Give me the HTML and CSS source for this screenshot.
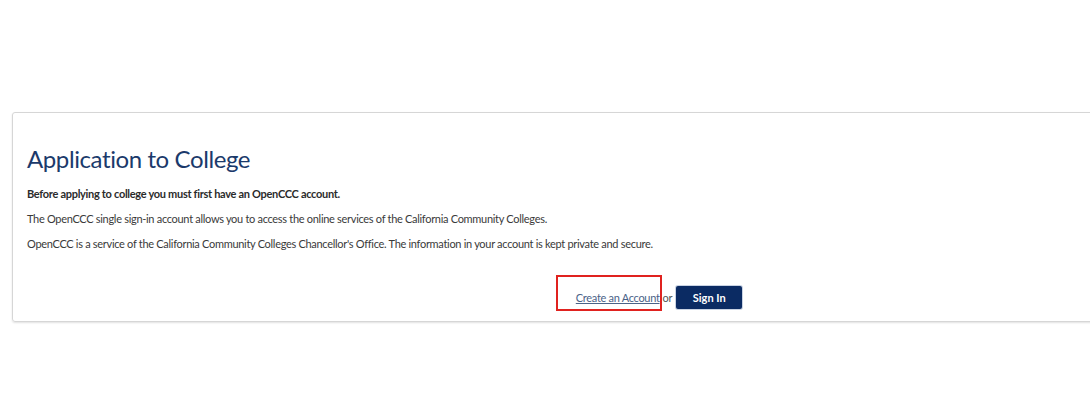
FILE: index.html
```html
<!DOCTYPE html>
<html lang="en">
<head>
<meta charset="utf-8">
<title>Application to College</title>
<link rel="stylesheet" href="styles.css">
</head>
<body>
<main class="page">
  <section class="card">
    <h1 class="card-title">Application to College</h1>
    <p class="lead">Before applying to college you must first have an OpenCCC account.</p>
    <p class="text">The OpenCCC single sign-in account allows you to access the online services of the California Community Colleges.</p>
    <p class="text">OpenCCC is a service of the California Community Colleges Chancellor's Office. The information in your account is kept private and secure.</p>
    <div class="actions">
      <span class="link-wrap">
        <a class="create-link" href="#">Create an Account</a>
        <span class="highlight"></span>
      </span>
      <span class="or">or</span>
      <button class="btn-signin" type="button">Sign In</button>
    </div>
  </section>
</main>
</body>
</html>
```
FILE: styles.css
```css
html, body {
  margin: 0;
  padding: 0;
  overflow: hidden;
  background: #ffffff;
}

body {
  width: 1090px;
  height: 400px;
  font-family: "Lato", "Liberation Sans", sans-serif;
  letter-spacing: -0.3px;
  color: #333333;
}

/* the card runs on past the right edge of the window, so clip it here */
.page {
  padding: 112px 0 6px 12px;
  overflow: hidden;
}

.card {
  width: 1294px;
  box-sizing: border-box;
  border: 1px solid #d6d6d6;
  border-radius: 3px;
  box-shadow: 0 1px 2px rgba(0, 0, 0, 0.12);
  padding: 31px 14px 10px 14px;
  height: 210px;
}

.card-title {
  margin: 0 0 12px 0;
  font-size: 24px;
  font-weight: 400;
  letter-spacing: -0.4px;
  line-height: 30px;
  color: #1b3a6b;
}

.lead {
  margin: 0 0 10px 0;
  font-size: 11px;
  font-weight: 700;
  line-height: 15px;
  color: #2b2b2b;
}

.text {
  margin: 0 0 10px 0;
  font-size: 11px;
  line-height: 15px;
  color: #3a3a3a;
}

.actions {
  display: flex;
  justify-content: center;
  align-items: center;
  margin-top: 35px;
  font-size: 11px;
}

.link-wrap {
  position: relative;
}

.create-link {
  color: #4a6287;
  text-decoration: underline;
}

.highlight {
  position: absolute;
  left: -20px;
  top: -16px;
  width: 102px;
  height: 32px;
  border: 2px solid #e0221f;
}

.or {
  color: #555555;
  margin: 0 4px 0 3px;
}

.btn-signin {
  font-family: inherit;
  font-size: 11px;
  font-weight: 700;
  letter-spacing: 0;
  color: #ffffff;
  background: #0b2b63;
  border: none;
  border-radius: 2px;
  box-shadow: 0 0 0 1px #c9d3e3;
  width: 66px;
  height: 23px;
  padding: 0;
}
```
